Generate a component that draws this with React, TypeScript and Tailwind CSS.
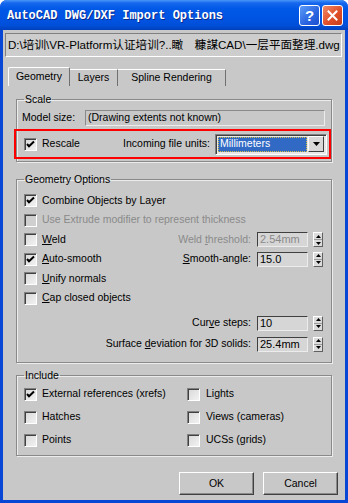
import React from "react";

const ui = "font-['Liberation_Sans','Noto_Sans_CJK_SC',sans-serif]";

function Check({ checked, disabled }: { checked?: boolean; disabled?: boolean }) {
  return (
    <span
      className={`flex w-[13px] h-[13px] shrink-0 border border-t-[#808080] border-l-[#808080] border-b-white border-r-white shadow-[inset_1px_1px_0_#404040] ${
        disabled ? "bg-[#cfcfcf]" : "bg-[linear-gradient(135deg,#d8d8d8,#f2f2f2)]"
      }`}
    >
      {checked && (
        <svg width="11" height="11" viewBox="0 0 11 11" className="block">
          <path d="M2 5 L4 7.2 L9 2.5" fill="none" stroke="#000" strokeWidth="2" />
        </svg>
      )}
    </span>
  );
}

function Field({ value, disabled, w = "w-[51px]" }: { value: string; disabled?: boolean; w?: string }) {
  return (
    <div
      className={`${w} h-[15px] flex items-center pl-[2px] border border-t-[#404040] border-l-[#404040] border-b-[#ececec] border-r-[#ececec] bg-[#d6d6d6] text-[11px] leading-none ${
        disabled ? "text-[#8a8a8a]" : "text-black"
      }`}
    >
      {value}
    </div>
  );
}

function Spinner() {
  return (
    <div className="flex flex-col w-[10px] h-[15px] border border-t-white border-l-white border-b-[#606060] border-r-[#606060] bg-[#dcdcdc]">
      <div className="flex-1 flex items-center justify-center border-b border-[#9a9a9a]">
        <svg width="5" height="3" viewBox="0 0 5 3" className="block">
          <path d="M0 3 L2.5 0 L5 3 Z" fill="#000" />
        </svg>
      </div>
      <div className="flex-1 flex items-center justify-center">
        <svg width="5" height="3" viewBox="0 0 5 3" className="block">
          <path d="M0 0 L5 0 L2.5 3 Z" fill="#000" />
        </svg>
      </div>
    </div>
  );
}

function Group({ title, className, children }: { title: string; className?: string; children: React.ReactNode }) {
  return (
    <fieldset
      className={`ml-[13px] w-[316px] border border-[#8a8a8a] shadow-[inset_1px_1px_0_#ececec,1px_1px_0_#ececec] ${className ?? ""}`}
    >
      <legend className="ml-[7px] px-[1px] text-[10.5px] leading-[14px] text-black">{title}</legend>
      {children}
    </fieldset>
  );
}

function CheckRow({
  label,
  checked,
  disabled,
  right,
}: {
  label: React.ReactNode;
  checked?: boolean;
  disabled?: boolean;
  right?: React.ReactNode;
}) {
  return (
    <div className="h-[19.5px] flex items-center pl-[7px] pr-[8px]">
      <Check checked={checked} disabled={disabled} />
      <span className={`ml-[5px] text-[10.5px] ${disabled ? "text-[#8a8a8a]" : "text-black"}`}>{label}</span>
      {right && <div className="ml-auto flex items-center">{right}</div>}
    </div>
  );
}

function SpinField({ label, value, disabled }: { label: React.ReactNode; value: string; disabled?: boolean }) {
  return (
    <>
      <span className={`text-[10.5px] mr-[6px] ${disabled ? "text-[#8a8a8a]" : "text-black"}`}>{label}</span>
      <Field value={value} disabled={disabled} />
      <div className="ml-[5px]">
        <Spinner />
      </div>
    </>
  );
}

function U({ children }: { children: React.ReactNode }) {
  return <span className="underline underline-offset-[1px]">{children}</span>;
}

export default function App() {
  return (
    <div className={`w-[348px] h-[503px] flex flex-col rounded-t-[7px] overflow-hidden bg-[#0846d6] ${ui}`}>
      {/* Title bar */}
      <div className="h-[30px] shrink-0 flex items-center pl-[7px] pr-[5px] bg-[linear-gradient(180deg,#4a96f8_0%,#1667ee_10%,#0058e6_30%,#0054e3_60%,#004fd9_85%,#0040bb_100%)]">
        <span className="text-white font-['Liberation_Mono','DejaVu_Sans_Mono',monospace] font-bold text-[12px] leading-none [text-shadow:1px_1px_0_#0a2a8a] mt-[1px] whitespace-nowrap">
          AutoCAD DWG/DXF Import Options
        </span>
        <div className="ml-auto flex gap-[2px]">
          <div className="w-[21px] h-[21px] rounded-[3px] border border-white flex items-center justify-center bg-[linear-gradient(135deg,#5b9cf8,#2a64e0_60%,#1c4fd0)]">
            <span className="text-white font-bold text-[15px] leading-none font-['Liberation_Sans',sans-serif]">?</span>
          </div>
          <div className="w-[21px] h-[21px] rounded-[3px] border border-white flex items-center justify-center bg-[linear-gradient(135deg,#f08a68,#e0502a_55%,#c63d18)]">
            <svg width="11" height="11" viewBox="0 0 11 11" className="block">
              <path d="M1.5 1.5 L9.5 9.5 M9.5 1.5 L1.5 9.5" stroke="#fff" strokeWidth="2" strokeLinecap="square" />
            </svg>
          </div>
        </div>
      </div>

      {/* Client area */}
      <div className="flex-1 mx-[3px] mb-[3px] bg-[#c8c8c8] flex flex-col">
        {/* Path */}
        <div className="mt-[3px] ml-[2px] w-[337px] h-[24px] flex items-center pl-[2px] border border-t-[#808080] border-l-[#808080] border-b-white border-r-white bg-[#cdcdcd] text-[11.6px] text-black whitespace-nowrap overflow-hidden">
          {"D:\\培训\\VR-Platform认证培训?..瞰　糠謀CAD\\一层平面整理.dwg"}
        </div>

        {/* Tabs */}
        <div className="mt-[10px] ml-[5px] h-[19px] flex items-end text-[10.5px] text-black">
          <div className="w-[62px] h-[19px] flex items-center justify-center border-l border-t border-white border-r border-r-[#707070] rounded-t-[2px]">
            Geometry
          </div>
          <div className="w-[48px] h-[17px] flex items-center justify-center border-t border-white border-r border-r-[#707070]">
            Layers
          </div>
          <div className="w-[108px] h-[17px] flex items-center justify-center border-t border-white border-r border-r-[#707070]">
            Spline Rendering
          </div>
        </div>

        {/* Scale */}
        <Group title="Scale" className="mt-[6px] pb-[2px]">
          <div className="mt-[4px] h-[16px] flex items-center pl-[5px] pr-[6px]">
            <span className="text-[10.5px] text-black">Model size:</span>
            <div className="ml-auto w-[240px] h-[16px] flex items-center pl-[2px] border border-t-[#8a8a8a] border-l-[#8a8a8a] border-b-[#ececec] border-r-[#ececec] text-[10.5px] text-black">
              (Drawing extents not known)
            </div>
          </div>
          <div className="mt-[3px] ml-[-3px] w-[317px] h-[30px] border-2 border-[#ff0000] flex items-center pl-[8px] pr-[2px]">
            <Check checked />
            <span className="ml-[5px] text-[10.5px] text-black">Rescale</span>
            <span className="ml-auto mr-[5px] text-[10.5px] text-black">Incoming file units:</span>
            <div className="w-[112px] h-[21px] flex items-center border border-t-[#808080] border-l-[#808080] border-b-white border-r-white shadow-[inset_1px_1px_0_#404040] bg-[#e8e8e8] pl-[2px] pr-[2px]">
              <div className="flex-1 h-[15px] bg-[#316ac5] border border-dotted border-[#d8c048] flex items-center pl-[1px] text-white text-[10.5px]">
                Millimeters
              </div>
              <div className="ml-[1px] w-[16px] h-[16px] flex items-center justify-center border border-t-white border-l-white border-b-[#404040] border-r-[#404040] bg-[#d8d8d8]">
                <svg width="7" height="4" viewBox="0 0 7 4" className="block">
                  <path d="M0 0 L7 0 L3.5 4 Z" fill="#000" />
                </svg>
              </div>
            </div>
          </div>
        </Group>

        {/* Geometry Options */}
        <Group title="Geometry Options" className="mt-[10px] pb-[7.5px]">
          <div className="pt-[5px]">
            <CheckRow label="Combine Objects by Layer" checked />
            <CheckRow label="Use Extrude modifier to represent thickness" disabled />
            <CheckRow
              label={
                <>
                  <U>W</U>eld
                </>
              }
              right={
                <SpinField
                  label={
                    <>
                      Weld <U>t</U>hreshold:
                    </>
                  }
                  value="2.54mm"
                  disabled
                />
              }
            />
            <CheckRow
              label={
                <>
                  <U>A</U>uto-smooth
                </>
              }
              checked
              right={
                <SpinField
                  label={
                    <>
                      <U>S</U>mooth-angle:
                    </>
                  }
                  value="15.0"
                />
              }
            />
            <CheckRow
              label={
                <>
                  <U>U</U>nify normals
                </>
              }
            />
            <CheckRow
              label={
                <>
                  <U>C</U>ap closed objects
                </>
              }
            />
          </div>
          <div className="mt-[4.5px]">
            <div className="h-[21px] flex items-center justify-end pr-[8px]">
              <SpinField
                label={
                  <>
                    Cur<U>v</U>e steps:
                  </>
                }
                value="10"
              />
            </div>
            <div className="h-[21px] flex items-center justify-end pr-[8px]">
              <SpinField
                label={
                  <>
                    Surface <U>d</U>eviation for 3D solids:
                  </>
                }
                value="25.4mm"
              />
            </div>
          </div>
        </Group>

        {/* Include */}
        <Group title="Include" className="mt-[5px] pb-[3.5px]">
          <div className="pt-[0.5px] grid grid-cols-[163px_1fr] pl-[7px]">
            {[
              ["External references (xrefs)", true, "Lights"],
              ["Hatches", false, "Views (cameras)"],
              ["Points", false, "UCSs (grids)"],
            ].map(([a, c, b]) => (
              <React.Fragment key={a as string}>
                <div className="h-[23px] flex items-center">
                  <Check checked={c as boolean} />
                  <span className="ml-[5px] text-[10.5px] text-black">{a}</span>
                </div>
                <div className="h-[23px] flex items-center">
                  <Check />
                  <span className="ml-[6px] text-[10.5px] text-black">{b}</span>
                </div>
              </React.Fragment>
            ))}
          </div>
        </Group>

        {/* Buttons */}
        <div className="mt-[16px] flex justify-end gap-[9px] pr-[7px]">
          {["OK", "Cancel"].map((t) => (
            <button
              key={t}
              className="w-[75px] h-[23px] border border-t-white border-l-white border-b-[#404040] border-r-[#404040] shadow-[inset_-1px_-1px_0_#8a8a8a] bg-[#c8c8c8] text-[10.5px] text-black"
            >
              {t}
            </button>
          ))}
        </div>
      </div>
    </div>
  );
}
